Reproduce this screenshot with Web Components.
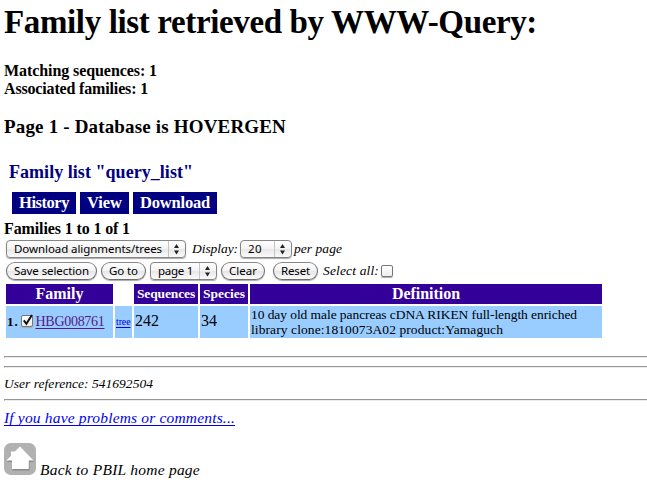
<!DOCTYPE html>
<html lang="en">
<head>
<meta charset="utf-8">
<title>Family list</title>
<style>
html,body{margin:0;background:#fff;color:#000;font-family:"Liberation Serif","Times New Roman",serif}
</style>
</head>
<body>
<family-page></family-page>
<script>
function define(name, markup, setup){
  customElements.define(name, class extends HTMLElement{
    connectedCallback(){
      if(this.shadowRoot) return;
      this.attachShadow({mode:"open"}).innerHTML = markup;
      if(setup) setup(this);
    }
  });
}

/* Text run tracked to an exact advance width: w = width, s = font size, lh = line height */
define("fit-text", `<style>
:host{display:block;white-space:pre;flex:none}
span{display:inline-block;vertical-align:top}
:host([link]) span{text-decoration:underline;text-decoration-thickness:1px;text-underline-offset:1.5px;text-decoration-skip-ink:none}
</style><span><slot></slot></span>`, el => {
  const s = parseFloat(el.getAttribute("s")), w = parseFloat(el.getAttribute("w"));
  el.style.fontSize = s + "px";
  el.style.lineHeight = (el.getAttribute("lh") || 20) + "px";
  el.style.width = w + "px";
  const span = el.shadowRoot.querySelector("span");
  const natural = span.getBoundingClientRect().width;
  span.style.letterSpacing = (w - natural) / el.textContent.length + "px";
});

define("menu-tab", `<style>
:host{display:flex;box-sizing:border-box;height:22px;padding-left:7px;background:#000080;color:#fff;font-weight:bold}
</style><slot></slot>`);

define("push-button", `<style>
:host{display:flex;justify-content:center;box-sizing:border-box;height:18px;border:1px solid #6e6e6e;border-top-color:#888;border-radius:9px;
background:linear-gradient(#fff 0,#f3f3f3 48%,#e6e6e6 52%,#fbfbfb 100%);box-shadow:0 1px 1px #aaa;font-family:"Noto Sans","Open Sans",sans-serif;font-weight:400}
</style><slot></slot>`);

define("pop-up", `<style>
:host{display:flex;justify-content:space-between;box-sizing:border-box;height:18px;border:1px solid #858585;border-radius:4px;padding-left:7px;
background:linear-gradient(#fff 0,#f3f3f3 48%,#e8e8e8 52%,#fafafa 100%);box-shadow:0 1px 1px #aaa;font-family:"Noto Sans","Open Sans",sans-serif;font-weight:400}
svg{display:block;width:17px;height:16px;flex:none}
</style><slot></slot><svg viewBox="0 0 17 16"><path d="M.5 0V16" stroke="#c5c5c5"/><path d="M6 7 8.5 3 11 7ZM6 9.5 8.5 13.5 11 9.5Z" fill="#222"/></svg>`);

define("check-box", `<style>
:host{display:block;box-sizing:border-box;width:12px;height:12px;border:1px solid #777;border-radius:2px;background:linear-gradient(#fff,#eee);box-shadow:0 1px 1px #aaa}
svg{display:none;overflow:visible}
:host([checked]) svg{display:block}
</style><svg width="10" height="10"><path d="M1.8 4.3 4.4 7.8 10 -1" fill="none" stroke="#111" stroke-width="2"/></svg>`);

define("grid-cell", `<style>
:host{display:flex;box-sizing:border-box;background:#99ccff}
:host([head]){background:#330099;color:#fff;font-weight:bold;justify-content:center}
:host([blank]){background:none}
</style><slot></slot>`);

define("rule-line", `<style>
:host{display:block;height:2px;box-sizing:border-box;border-top:1px solid #949494;border-bottom:1px solid #ececec;border-left:1px solid #999}
</style>`);

define("home-icon", `<style>:host{display:block;width:32px;height:32px}svg{display:block}</style>
<svg width="32" height="32" viewBox="0 0 32 32"><rect width="32" height="32" rx="7" fill="#b1b1b1"/>
<path d="M3 19 7.5 14V9.5H11L16.5 4.5 30 19H25.5V27.5H8.5V19Z" fill="#888"/>
<path d="M2.5 17.5 7 12.8V8.5H10.8L16 3.5 29.5 17.5H24.8V26H8V17.5Z" fill="#fff"/></svg>`);

define("family-table", `<style>
:host{display:grid;grid-template-columns:107px 17px 64px 48px 352px;grid-template-rows:20px 32px;gap:2px}
grid-cell.fam{padding:8px 0 0 1px}
check-box{margin:1px 3px 0 2px}
a{color:#551a8b;text-decoration:none}
a.tree{color:#0000ee}
.tree,.num{padding:5px 0 0 1px}
a.tree{padding:0}
.def{flex-direction:column;padding:1px 0 0 1px}
</style>
<grid-cell head><fit-text s="16" w="48">Family</fit-text></grid-cell>
<grid-cell blank></grid-cell>
<grid-cell head><fit-text s="13.5" w="58">Sequences</fit-text></grid-cell>
<grid-cell head><fit-text s="13.5" w="42">Species</fit-text></grid-cell>
<grid-cell head><fit-text s="16" w="68">Definition</fit-text></grid-cell>
<grid-cell class="fam"><fit-text s="13" w="11.5" lh="16" style="font-weight:bold">1.</fit-text><check-box checked></check-box><a href="#"><fit-text s="14" w="69" lh="16" link>HBG008761</fit-text></a></grid-cell>
<grid-cell class="tree"><a class="tree" href="#"><fit-text s="10" w="14.5" lh="22" link>tree</fit-text></a></grid-cell>
<grid-cell class="num"><fit-text s="16" w="24">242</fit-text></grid-cell>
<grid-cell class="num"><fit-text s="16" w="16">34</fit-text></grid-cell>
<grid-cell class="def"><fit-text s="13.5" w="326" lh="15">10 day old male pancreas cDNA RIKEN full-length enriched</fit-text><fit-text s="13.5" w="252" lh="15">library clone:1810073A02 product:Yamaguch</fit-text></grid-cell>`);

define("query-controls", `<style>
:host{display:grid;row-gap:4px}
div{display:flex;height:18px}
i{display:block;margin-top:-1px}
</style>
<div><pop-up style="width:180px"><fit-text s="11.5" w="148" lh="16">Download alignments/trees</fit-text></pop-up>
<i style="margin-left:6px"><fit-text s="13.5" w="46">Display:</fit-text></i>
<pop-up style="width:52px;margin-left:2px"><fit-text s="11.5" w="14" lh="16">20</fit-text></pop-up>
<i style="margin-left:2px"><fit-text s="13.5" w="48">per page</fit-text></i></div>
<div><push-button style="width:91px"><fit-text s="11.5" w="75" lh="16">Save selection</fit-text></push-button>
<push-button style="width:45px;margin-left:4px"><fit-text s="11.5" w="29" lh="16">Go to</fit-text></push-button>
<pop-up style="width:67px;margin-left:4px"><fit-text s="11.5" w="35" lh="16">page 1</fit-text></pop-up>
<push-button style="width:44px;margin-left:4px"><fit-text s="11.5" w="28" lh="16">Clear</fit-text></push-button>
<push-button style="width:45px;margin-left:8px"><fit-text s="11.5" w="29" lh="16">Reset</fit-text></push-button>
<i style="margin-left:5px"><fit-text s="13.5" w="56">Select all:</fit-text></i>
<check-box style="margin:3px 0 0 2px"></check-box></div>`);

define("family-page", `<style>
:host{display:flow-root;width:647px;height:496px;overflow:hidden}
main{padding-left:4px}
h1,h2,h3,h4{margin:0;font-weight:bold}
h1{margin-top:4px}
.counts{margin-top:22px}
.db{margin-top:19px}
.title{margin:25px 0 0 5px;color:#000080}
nav{display:flex;gap:4px;margin:10px 0 0 8px}
.shown{margin-top:5px}
query-controls{margin:2px 0 0 2px}
family-table{margin:4px 0 18px 2px}
rule-line + rule-line{margin-top:8px}
i{display:block}
.user{margin:6px 0 5px}
a{color:#0000ee;text-decoration:none}
.comments{margin-top:7px}
footer{display:flex;gap:4px;margin-top:15px;align-items:flex-start}
footer i{margin-top:17px}
</style>
<main>
<h1><fit-text s="33" w="533" lh="36">Family list retrieved by WWW-Query:</fit-text></h1>
<h4 class="counts"><fit-text s="16" w="153" lh="18">Matching sequences: 1</fit-text><fit-text s="16" w="144" lh="18">Associated families: 1</fit-text></h4>
<h2 class="db"><fit-text s="19" w="282" lh="20">Page 1 - Database is HOVERGEN</fit-text></h2>
<h3 class="title"><fit-text s="18" w="184" lh="20">Family list "query_list"</fit-text></h3>
<nav><menu-tab style="width:64px"><fit-text s="16.5" w="50" lh="21">History</fit-text></menu-tab><menu-tab style="width:49px"><fit-text s="16.5" w="35" lh="21">View</fit-text></menu-tab><menu-tab style="width:84px"><fit-text s="16.5" w="70" lh="21">Download</fit-text></menu-tab></nav>
<h4 class="shown"><fit-text s="16" w="126" lh="19">Families 1 to 1 of 1</fit-text></h4>
<query-controls></query-controls>
<family-table></family-table>
<rule-line></rule-line><rule-line></rule-line>
<i class="user"><fit-text s="13.5" w="149" lh="20">User reference: 541692504</fit-text></i>
<rule-line></rule-line>
<i class="comments"><a href="#"><fit-text s="15.5" w="231" lh="20" link>If you have problems or comments...</fit-text></a></i>
<footer><home-icon></home-icon><i><fit-text s="15.5" w="160" lh="20">Back to PBIL home page</fit-text></i></footer>
</main>`);
</script>
</body>
</html>
